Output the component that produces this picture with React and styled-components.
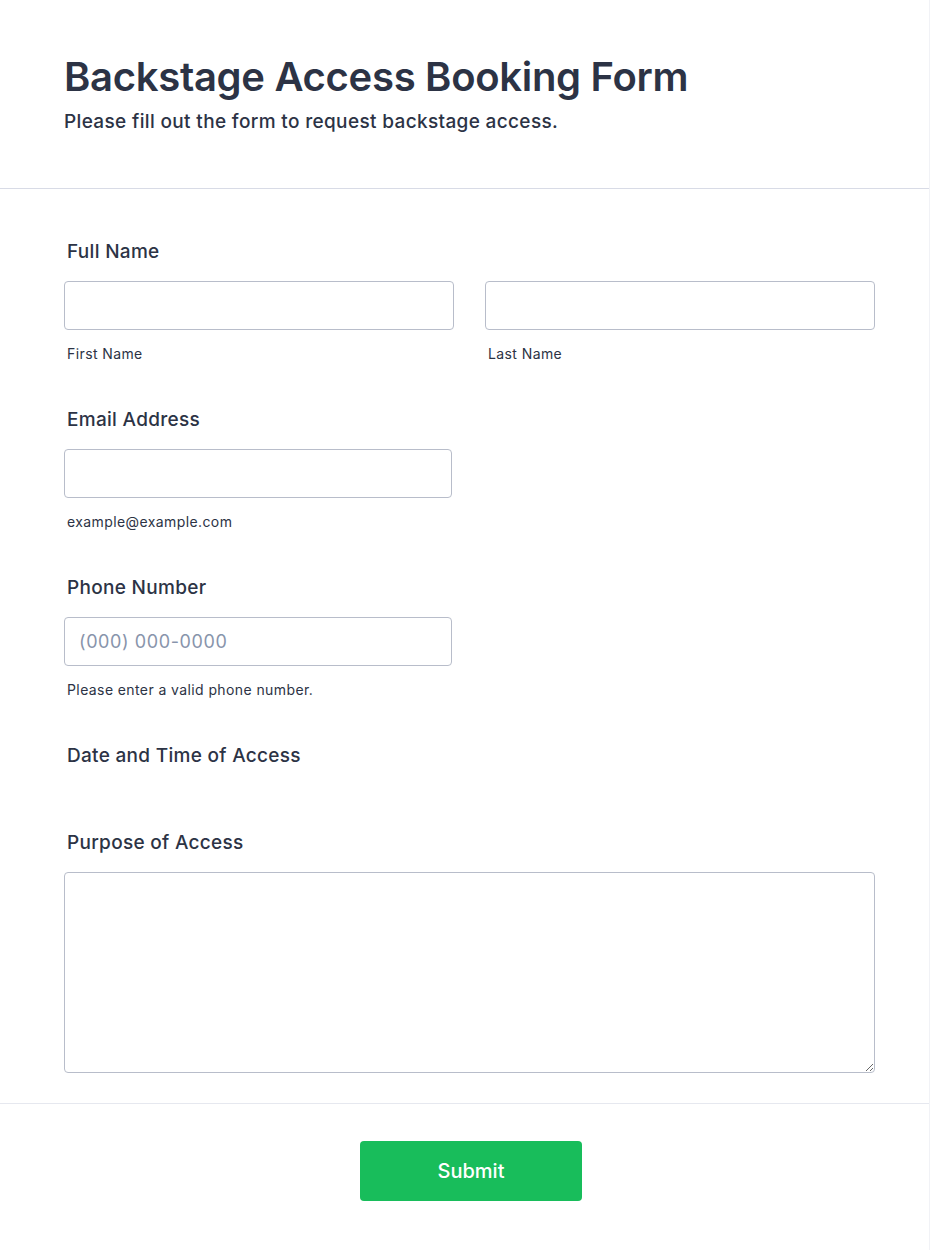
import styled, { createGlobalStyle } from "styled-components";

const GlobalStyle = createGlobalStyle`
  html, body {
    margin: 0;
    padding: 0;
    background: #ffffff;
  }
  body {
    font-family: Inter, "Noto Sans", "Liberation Sans", sans-serif;
    color: #2c3345;
  }
  * {
    box-sizing: border-box;
  }
`;

const App = () => {
    return (
        <>
        <GlobalStyle />
        <Card>
            <Header>
                <Title>Backstage Access Booking Form</Title>
                <Subtitle>Please fill out the form to request backstage access.</Subtitle>
            </Header>
            <Body>
                <Field>
                    <Label>Full Name</Label>
                    <Row>
                        <Column>
                            <Input type="text" />
                            <SubLabel>First Name</SubLabel>
                        </Column>
                        <Column>
                            <Input type="text" />
                            <SubLabel>Last Name</SubLabel>
                        </Column>
                    </Row>
                </Field>
                <Field>
                    <Label>Email Address</Label>
                    <Column $width="388px">
                        <Input type="email" />
                        <SubLabel>example@example.com</SubLabel>
                    </Column>
                </Field>
                <Field>
                    <Label>Phone Number</Label>
                    <Column $width="388px">
                        <Input type="tel" placeholder="(000) 000-0000" />
                        <SubLabel>Please enter a valid phone number.</SubLabel>
                    </Column>
                </Field>
                <Field $space="44px">
                    <Label>Date and Time of Access</Label>
                </Field>
                <Field $space="0">
                    <Label>Purpose of Access</Label>
                    <TextArea />
                </Field>
            </Body>
            <Footer>
                <SubmitButton type="button">Submit</SubmitButton>
            </Footer>
        </Card>
        </>
    )
}

export default App;

const Card = styled.div`
  width: 930px;
  min-height: 1250px;
  border-right: 1px solid #f1f2f6;
  background: #ffffff;
`;

const Header = styled.div`
  padding: 53px 64px 54px;
  border-bottom: 1px solid #d8dbe6;
`;

const Title = styled.h1`
  margin: 0;
  font-size: 40px;
  line-height: 48px;
  font-weight: 600;
  letter-spacing: -0.3px;
  color: #2c3345;
`;

const Subtitle = styled.p`
  margin: 9px 0 0;
  font-size: 19px;
  line-height: 24px;
  font-weight: 500;
  letter-spacing: 0.35px;
  color: #2c3345;
`;

const Body = styled.div`
  padding: 49px 54px 30px 64px;
  border-bottom: 1px solid #e6e8ef;
`;

const Field = styled.div`
  display: flex;
  flex-direction: column;
  margin-bottom: ${(p) => p.$space || "42px"};
`;

const Label = styled.label`
  display: block;
  padding-left: 3px;
  margin-bottom: 15px;
  font-size: 19px;
  line-height: 28px;
  font-weight: 500;
  letter-spacing: 0.3px;
  color: #2c3345;
`;

const Row = styled.div`
  display: grid;
  grid-template-columns: 1fr 1fr;
  column-gap: 31px;
`;

const Column = styled.div`
  display: flex;
  flex-direction: column;
  width: ${(p) => p.$width || "auto"};
`;

const Input = styled.input`
  display: block;
  width: 100%;
  height: 49px;
  padding: 0 14px;
  border: 1px solid #b8bdca;
  border-radius: 4px;
  background: #ffffff;
  font-family: Inter, "Noto Sans", sans-serif;
  font-size: 18px;
  font-weight: 400;
  letter-spacing: 0.6px;
  color: #2c3345;
  outline: none;

  &::placeholder {
    color: #8894ab;
  }
`;

const SubLabel = styled.span`
  display: block;
  margin-top: 14px;
  padding-left: 3px;
  font-size: 14px;
  line-height: 20px;
  letter-spacing: 0.4px;
  color: #2c3345;
`;

const TextArea = styled.textarea`
  display: block;
  width: 100%;
  height: 201px;
  padding: 10px 14px;
  border: 1px solid #b8bdca;
  border-radius: 4px;
  background: #ffffff;
  font-family: Inter, "Noto Sans", sans-serif;
  font-size: 16px;
  color: #2c3345;
  resize: vertical;
  outline: none;
`;

const Footer = styled.div`
  display: flex;
  justify-content: center;
  padding: 37px 0 50px 13px;
`;

const SubmitButton = styled.button`
  width: 222px;
  height: 60px;
  border: none;
  border-radius: 4px;
  background: #18bd5b;
  color: #ffffff;
  font-family: Inter, "Noto Sans", sans-serif;
  font-size: 20px;
  font-weight: 500;
  cursor: pointer;
`;
